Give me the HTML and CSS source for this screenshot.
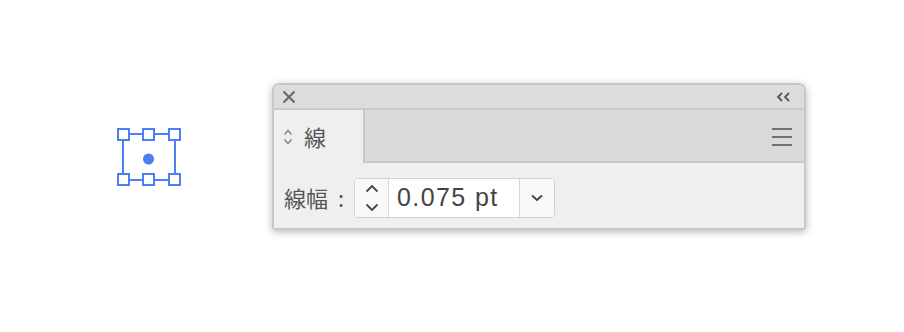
FILE: index.html
```html
<!DOCTYPE html>
<html lang="ja">
<head>
<meta charset="utf-8">
<link rel="stylesheet" href="styles.css">
</head>
<body>
<div class="stage">
  <svg class="sel" width="66" height="60" viewBox="0 0 66 60">
    <g fill="none" stroke="#4d7ef6" stroke-width="2">
      <rect x="7" y="7" width="52" height="46"/>
      <rect x="2" y="2" width="11" height="11" fill="#fff"/>
      <rect x="27" y="2" width="11" height="11" fill="#fff"/>
      <rect x="53" y="2" width="11" height="11" fill="#fff"/>
      <rect x="2" y="47" width="11" height="11" fill="#fff"/>
      <rect x="27" y="47" width="11" height="11" fill="#fff"/>
      <rect x="53" y="47" width="11" height="11" fill="#fff"/>
    </g>
    <circle cx="32.5" cy="32" r="5.5" fill="#4d7ef6"/>
  </svg>
  <div class="panel">
    <div class="titlebar">
      <svg class="close" width="14" height="14" viewBox="0 0 14 14">
        <path d="M1.5 1.5 L12.5 12.5 M12.5 1.5 L1.5 12.5" stroke="#666" stroke-width="2" fill="none"/>
      </svg>
      <svg class="collapse" width="16" height="10" viewBox="0 0 16 10">
        <path d="M6 1 L2 5 L6 9 M13 1 L9 5 L13 9" stroke="#555" stroke-width="1.8" fill="none"/>
      </svg>
    </div>
    <div class="tabrow">
      <div class="tab">
        <svg class="updown" width="10" height="18" viewBox="0 0 10 18">
          <path d="M1.5 6.5 L5 2.5 L8.5 6.5 M1.5 11.5 L5 15.5 L8.5 11.5" stroke="#777" stroke-width="1.2" fill="none"/>
        </svg>
        <span class="tabtitle">線</span>
      </div>
      <div class="tabrest">
        <svg class="menu" width="20" height="18" viewBox="0 0 20 18">
          <path d="M0 1 H20 M0 9 H20 M0 17 H20" stroke="#707070" stroke-width="2" fill="none"/>
        </svg>
      </div>
    </div>
    <div class="content">
      <span class="label">線幅 :</span>
      <div class="field">
        <div class="spin">
          <svg width="16" height="32" viewBox="0 0 16 32">
            <path d="M2.5 9.5 L8 4 L13.5 9.5 M2.5 22.5 L8 28 L13.5 22.5" stroke="#444" stroke-width="1.8" fill="none"/>
          </svg>
        </div>
        <div class="input">0.075 pt</div>
        <div class="drop">
          <svg width="14" height="8" viewBox="0 0 14 8">
            <path d="M2 1.5 L7 6 L12 1.5" stroke="#444" stroke-width="2" fill="none"/>
          </svg>
        </div>
      </div>
    </div>
  </div>
</div>
</body>
</html>
```
FILE: styles.css
```css
html, body {
  margin: 0;
  padding: 0;
  background: #ffffff;
}
body {
  width: 904px;
  height: 332px;
  overflow: hidden;
  font-family: "Liberation Sans", "Noto Sans CJK JP", sans-serif;
}
.stage {
  display: flex;
  align-items: flex-start;
  padding-top: 83px;
}
.sel {
  display: block;
  margin-left: 116px;
  margin-top: 44px;
  flex: none;
}
.panel {
  margin-left: 90px;
  width: 530px;
  border: 2px solid #c7c7c7;
  border-radius: 7px 7px 3px 3px;
  box-shadow: 0 2px 8px rgba(0, 0, 0, 0.28);
  overflow: hidden;
  flex: none;
}
.titlebar {
  height: 23px;
  background: #dcdcdc;
  border-bottom: 2px solid #c9c9c9;
  display: flex;
  align-items: center;
  justify-content: space-between;
  padding: 0 12px 0 8px;
}
.close {
  display: block;
  margin-top: 1px;
}
.collapse {
  display: block;
  margin-top: 1px;
}
.tabrow {
  display: flex;
  height: 53px;
}
.tab {
  width: 91px;
  background: #efefef;
  border-right: 2px solid #c8c8c8;
  display: flex;
  align-items: center;
  padding-left: 9px;
  box-sizing: border-box;
}
.updown {
  display: block;
  margin-top: 1px;
}
.tabtitle {
  font-family: "Noto Sans CJK JP", sans-serif;
  font-size: 22px;
  color: #555;
  margin-left: 11px;
  margin-top: -2px;
}
.tabrest {
  flex: 1;
  background: #dadada;
  border-bottom: 2px solid #c8c8c8;
  display: flex;
  align-items: center;
  justify-content: flex-end;
  padding-right: 12px;
}
.menu {
  display: block;
  margin-top: 2px;
}
.content {
  height: 65px;
  background: #efefef;
  display: flex;
  align-items: center;
  padding-left: 10px;
}
.label {
  font-family: "Noto Sans CJK JP", sans-serif;
  font-size: 22px;
  color: #555;
  margin-top: 3px;
  word-spacing: 5px;
}
.field {
  display: flex;
  height: 38px;
  margin-left: 10px;
  margin-top: 4px;
  border: 1px solid #d2d2d2;
  border-radius: 4px;
  overflow: hidden;
}
.spin {
  width: 33px;
  background: #f8f8f8;
  border-right: 1px solid #d6d6d6;
  display: flex;
  align-items: center;
  justify-content: center;
}
.spin svg, .drop svg {
  display: block;
}
.input {
  width: 122px;
  background: #ffffff;
  font-size: 25px;
  letter-spacing: 1.4px;
  color: #444;
  display: flex;
  align-items: center;
  padding-left: 8px;
  border-right: 1px solid #d6d6d6;
}
.drop {
  width: 34px;
  background: #f8f8f8;
  display: flex;
  align-items: center;
  justify-content: center;
}
```
